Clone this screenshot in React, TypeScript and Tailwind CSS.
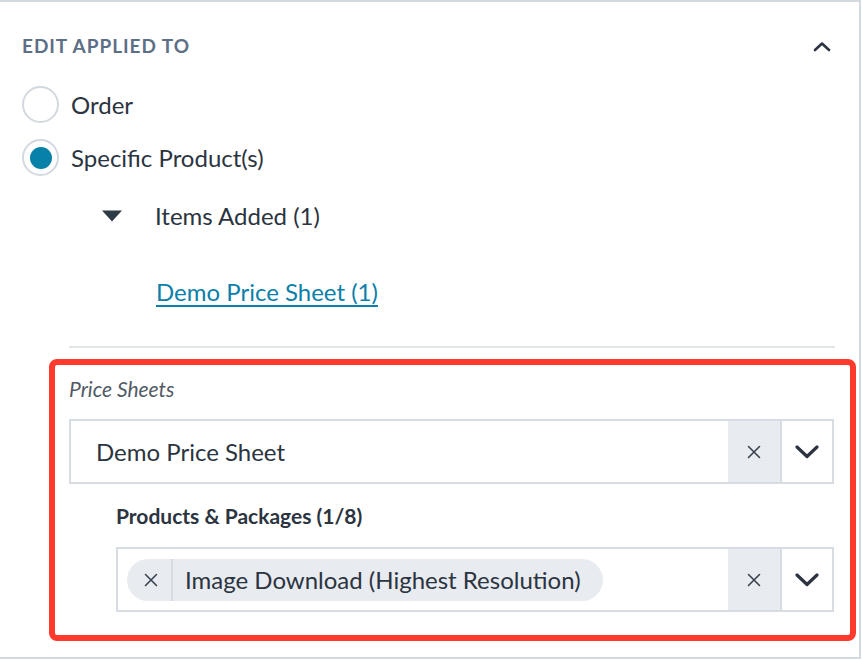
import React from "react";

const XIcon = ({ size = 14 }: { size?: number }) => (
  <svg width={size} height={size} viewBox="0 0 14 14" fill="none">
    <path d="M1.5 1.5 L12.5 12.5 M12.5 1.5 L1.5 12.5" stroke="#3a4350" strokeWidth="1.6" strokeLinecap="round" />
  </svg>
);

const ChevronDown = () => (
  <svg width="24" height="14" viewBox="0 0 24 14" fill="none">
    <path d="M2 2 L12 11.5 L22 2" stroke="#2b3440" strokeWidth="3.2" strokeLinecap="round" strokeLinejoin="round" />
  </svg>
);

const Select = ({ children, className = "" }: { children: React.ReactNode; className?: string }) => (
  <div className={`flex h-[65px] border-2 border-[#d6dce2] bg-white ${className}`}>
    <div className="flex min-w-0 flex-1 items-center">{children}</div>
    <div className="flex w-[52px] items-center justify-center bg-[#e8ebef]">
      <XIcon />
    </div>
    <div className="flex w-[52px] items-center justify-center border-l-2 border-[#d6dce2]">
      <ChevronDown />
    </div>
  </div>
);

export default function App() {
  return (
    <div
      className="h-[659px] w-[861px] border-r-2 border-t-2 border-b-2 border-[#d2d9e0] bg-white text-[#2b3440]"
      style={{ fontFamily: "Lato, 'Open Sans', sans-serif" }}
    >
      <div className="pl-[22px] pr-[24px]">
        <div className="flex h-[84px] items-center justify-between pt-[4px]">
          <span className="text-[19px] font-bold uppercase tracking-[0.05em] text-[#5d6f86]">Edit Applied To</span>
          <svg width="18" height="11" viewBox="0 0 18 11" fill="none" className="mr-[4px]">
            <path d="M2 9 L9 2.5 L16 9" stroke="#2b3440" strokeWidth="2.6" strokeLinecap="round" strokeLinejoin="round" />
          </svg>
        </div>
        <div className="flex h-[37px] items-center gap-[12px]">
          <span className="h-[37px] w-[37px] rounded-full border-2 border-[#d3d9e0]" />
          <span className="text-[24px]">Order</span>
        </div>
        <div className="mt-[16px] flex h-[37px] items-center gap-[12px]">
          <span className="flex h-[37px] w-[37px] items-center justify-center rounded-full border-2 border-[#d3d9e0]">
            <span className="h-[22px] w-[22px] rounded-full bg-[#0881a8]" />
          </span>
          <span className="text-[24px]">Specific Product(s)</span>
        </div>
        <div className="mt-[20px] flex h-[40px] items-center">
          <svg width="20" height="12" viewBox="0 0 20 12" className="ml-[80px]">
            <path d="M0 0.5 H20 L10 11.5 Z" fill="#2f3a47" />
          </svg>
          <span className="ml-[33px] text-[24px]">Items Added (1)</span>
        </div>
        <div className="mt-[36px] flex h-[40px] items-center pl-[134px]">
          <span className="text-[24px] text-[#0b80a8] underline decoration-[1.5px] underline-offset-[4px]">
            Demo Price Sheet (1)
          </span>
        </div>
        <div className="ml-[47px] mt-[34px] h-[2px] bg-[#e1e6eb]" />
      </div>
      <div className="ml-[49px] mr-[3px] mt-[11px] h-[282px] rounded-[8px] border-[6px] border-[#fe3a2c] pl-[14px] pr-[16px]">
        <div className="flex h-[54px] items-center pb-[6px]">
          <span className="text-[21px] italic text-[#525a66]">Price Sheets</span>
        </div>
        <Select>
          <span className="pl-[25px] text-[24px]">Demo Price Sheet</span>
        </Select>
        <div className="flex h-[63px] items-center pl-[47px]">
          <span className="text-[21px] font-bold text-[#2b3440]">Products &amp; Packages (1/8)</span>
        </div>
        <Select className="ml-[47px]">
          <div className="ml-[9px] flex h-[42px] items-center rounded-full bg-[#e8ebef]">
            <span className="flex h-full w-[46px] items-center justify-center border-r-2 border-[#d6dce2] pl-[4px]">
              <XIcon />
            </span>
            <span className="pl-[12px] pr-[22px] text-[24px]">Image Download (Highest Resolution)</span>
          </div>
        </Select>
      </div>
    </div>
  );
}
